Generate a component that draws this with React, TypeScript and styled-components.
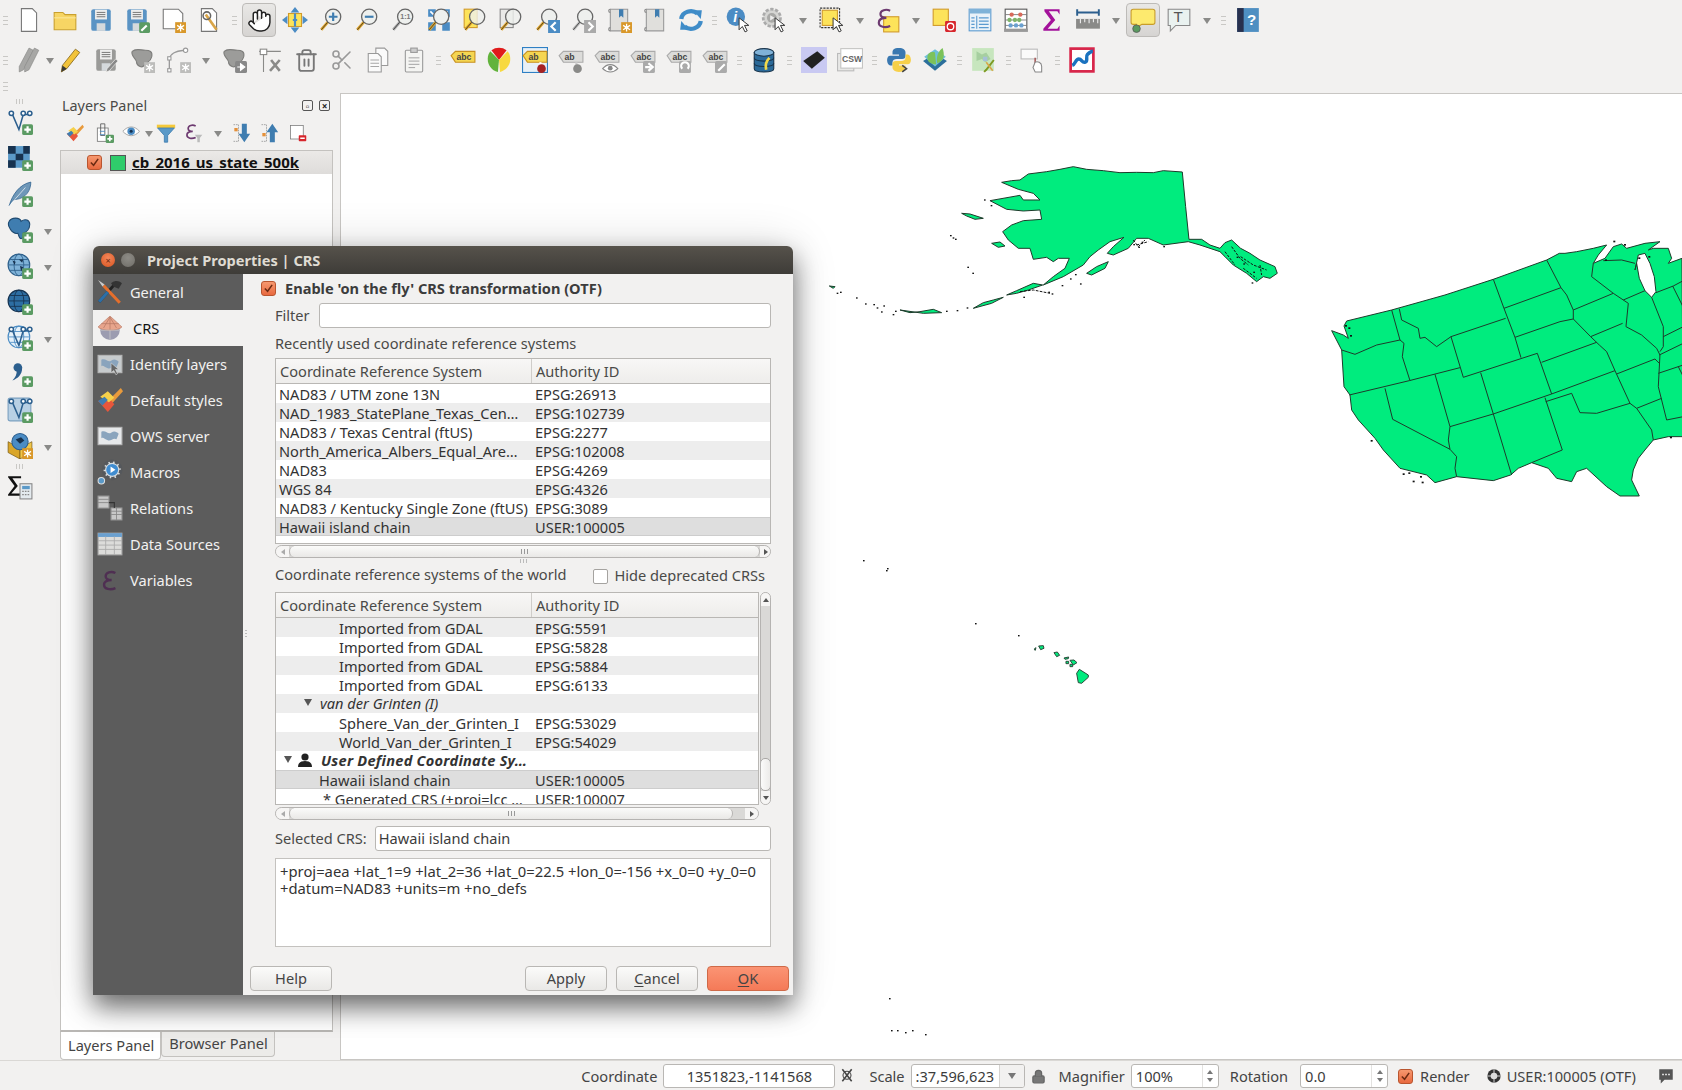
import React from "react";
import styled, { createGlobalStyle, css } from "styled-components";
import { Hand, Trash2, Scissors, Lock } from "lucide-react";

const GlobalStyle = createGlobalStyle`
  html, body { margin: 0; padding: 0; background: #f2f1f0; }
  body { font-family: "Noto Sans", "Open Sans", sans-serif; font-size: 14.6px; color: #3c3c3c; }
  svg text { font-family: "Liberation Sans", sans-serif; }
`;

const Screen = styled.div`
  position: relative;
  width: 1682px;
  height: 1090px;
  overflow: hidden;
  display: flex;
  flex-direction: column;
  background: #f2f1f0;
`;

const ToolRow = styled.div`
  height: 40px;
  display: flex;
  align-items: center;
  flex-shrink: 0;
`;

const ThinRow = styled.div`
  height: 13px;
  display: flex;
  align-items: center;
  flex-shrink: 0;
`;

const Tool = styled.div<{ $on?: boolean }>`
  width: 36px;
  height: 34px;
  flex-shrink: 0;
  display: flex;
  align-items: center;
  justify-content: center;
  box-sizing: border-box;
  border-radius: 4px;
  ${(p) =>
    p.$on &&
    css`
      width: 34px;
      margin: 0 1px;
      background: linear-gradient(#e9e8e6, #d6d4d2);
      border: 1px solid #bdbbb8;
    `}
`;

const Drop = styled.div<{ $w: number }>`
  width: ${(p) => p.$w}px;
  flex-shrink: 0;
  display: flex;
  justify-content: center;
  &::after {
    content: "";
    flex-shrink: 0;
    border-left: 4px solid transparent;
    border-right: 4px solid transparent;
    border-top: 6px solid #8a8a88;
    margin-top: 2px;
  }
`;

const Grip = styled.div<{ $w: number }>`
  width: ${(p) => p.$w}px;
  height: 9px;
  flex-shrink: 0;
  display: flex;
  justify-content: center;
  &::after {
    content: "";
    width: 5px;
    background: repeating-linear-gradient(#c9c8c5 0 1px, transparent 1px 4px);
  }
`;

const Middle = styled.div`
  flex: 1;
  display: flex;
  min-height: 0;
`;

const LeftBar = styled.div`
  width: 60px;
  flex-shrink: 0;
  display: flex;
  flex-direction: column;
  padding-top: 6px;
  box-sizing: border-box;
`;

const LeftGrip = styled.div`
  height: 5px;
  width: 38px;
  background: repeating-linear-gradient(90deg, #c9c8c5 0 1px, transparent 1px 3px);
  background-size: 7px 5px;
  background-repeat: no-repeat;
  background-position: center;
`;

const LeftItem = styled.div`
  height: 36px;
  display: flex;
  align-items: center;
  padding-left: 7px;
  position: relative;
`;

const LeftDrop = styled.span`
  position: absolute;
  left: 44px;
  top: 17px;
  border-left: 4px solid transparent;
  border-right: 4px solid transparent;
  border-top: 6px solid #8a8a88;
`;

const Panel = styled.div`
  width: 273px;
  flex-shrink: 0;
  display: flex;
  flex-direction: column;
`;

const PanelTitle = styled.div`
  height: 25px;
  display: flex;
  align-items: center;
  padding-left: 2px;
  color: #4a4a48;
  font-size: 14.4px;
  justify-content: space-between;
`;

const PanelBtns = styled.div`
  display: flex;
  gap: 6px;
  padding-right: 3px;
`;

const MiniBox = styled.span`
  width: 11px;
  height: 11px;
  border: 1px solid #555;
  border-radius: 2px;
  box-sizing: border-box;
  display: flex;
  align-items: center;
  justify-content: center;
  font-size: 10px;
  line-height: 1;
  font-weight: 700;
  color: #222;
`;

const PanelTools = styled.div`
  height: 32px;
  box-sizing: border-box;
  padding: 0 0 3px 1px;
  display: flex;
  align-items: center;
`;

const PanelTool = styled.div`
  width: 28.5px;
  display: flex;
  justify-content: center;
  flex-shrink: 0;
`;

const Tree = styled.div`
  flex: 1;
  background: #fff;
  border: 1px solid #c4c2bf;
  border-bottom: 2px solid #b9b7b4;
`;

const LayerRow = styled.div`
  height: 23px;
  display: flex;
  align-items: center;
  padding-left: 26px;
  background: linear-gradient(#ebe9e7, #dedcda);
`;

const Swatch = styled.span`
  width: 16px;
  height: 16px;
  margin-left: 8px;
  background: #2fcc6b;
  border: 1px solid #555;
  box-sizing: border-box;
`;

const LayerName = styled.span`
  margin: 0 0 1px 6px;
  font-weight: 700;
  font-size: 15px;
  color: #111;
  text-decoration: underline;
`;

const OrangeCheck = styled.span`
  width: 15px;
  height: 15px;
  flex-shrink: 0;
  box-sizing: border-box;
  border-radius: 3px;
  background: linear-gradient(#f6986f, #e8693f);
  border: 1px solid #b9552f;
  display: flex;
  align-items: center;
  justify-content: center;
`;

const Tabs = styled.div`
  height: 28px;
  display: flex;
  align-items: flex-start;
`;

const Tab = styled.div<{ $on?: boolean }>`
  height: ${(p) => (p.$on ? 28 : 25)}px;
  box-sizing: border-box;
  padding: 0 6px 2px 7px;
  display: flex;
  align-items: center;
  border: 1px solid #c4c2bf;
  border-top: none;
  border-radius: 0 0 4px 4px;
  background: ${(p) => (p.$on ? "#fff" : "#ecebe9")};
  color: #444;
`;

const MapArea = styled.div`
  flex: 1;
  margin-left: 7px;
  background: #fff;
  border: 1px solid #c8c6c3;
  border-right: none;
  min-width: 0;
  overflow: hidden;
`;

const MapSvg = styled.svg`
  display: block;
  width: 100%;
  height: 100%;
`;

const StatusBar = styled.div`
  height: 30px;
  flex-shrink: 0;
  display: flex;
  align-items: center;
  justify-content: flex-end;
  padding: 1px 7px 0 0;
  color: #444;
  border-top: 1px solid #dad8d5;
  box-sizing: border-box;
`;

const StatusLabel = styled.span<{ $ml: number }>`
  margin-left: ${(p) => p.$ml}px;
  white-space: nowrap;
`;

const StatusField = styled.div<{ $w: number; $ml: number; $center?: boolean }>`
  width: ${(p) => p.$w}px;
  margin-left: ${(p) => p.$ml}px;
  height: 24px;
  flex-shrink: 0;
  box-sizing: border-box;
  background: #fff;
  border: 1px solid #b9b7b4;
  border-radius: 3px;
  display: flex;
  align-items: center;
  justify-content: ${(p) => (p.$center ? "center" : "space-between")};
  padding-left: ${(p) => (p.$center ? 0 : 4)}px;
  overflow: hidden;
  color: #3c3c3c;
`;

const SpinArrows = styled.span`
  width: 16px;
  height: 100%;
  border-left: 1px solid #e3e2e0;
  display: flex;
  flex-direction: column;
  justify-content: space-between;
  align-items: center;
  padding: 5px 0;
  box-sizing: border-box;
  &::before,
  &::after {
    content: "";
    border-left: 3px solid transparent;
    border-right: 3px solid transparent;
  }
  &::before {
    border-bottom: 4px solid #777;
  }
  &::after {
    border-top: 4px solid #777;
  }
`;

const ComboArrow = styled.span`
  width: 24px;
  height: 100%;
  border-left: 1px solid #d5d3d0;
  background: #f2f1f0;
  display: flex;
  align-items: center;
  justify-content: center;
  &::after {
    content: "";
    border-left: 4px solid transparent;
    border-right: 4px solid transparent;
    border-top: 6px solid #777;
  }
`;

const StatusIcon = styled.span<{ $ml: number }>`
  margin-left: ${(p) => p.$ml}px;
  display: flex;
  align-items: center;
`;

/* dialog floats over the main window */
const Dialog = styled.div`
  position: absolute;
  left: 93px;
  top: 246px;
  width: 700px;
  height: 749px;
  display: flex;
  flex-direction: column;
  border-radius: 6px 6px 0 0;
  box-shadow: 0 12px 26px rgba(0, 0, 0, 0.55), 0 0 48px rgba(0, 0, 0, 0.14);
`;

const TitleBar = styled.div`
  height: 28px;
  flex-shrink: 0;
  display: flex;
  align-items: center;
  padding-left: 8px;
  border-radius: 6px 6px 0 0;
  background: linear-gradient(#56524b, #3e3c38);
`;

const WinBtn = styled.span<{ $close?: boolean }>`
  width: 14px;
  height: 14px;
  border-radius: 50%;
  margin-right: 6px;
  display: flex;
  align-items: center;
  justify-content: center;
  font-size: 9px;
  line-height: 1;
  color: #6b2a12;
  background: ${(p) =>
    p.$close
      ? "radial-gradient(circle at 50% 35%, #f3875a, #d9541f)"
      : "radial-gradient(circle at 50% 35%, #8e8c86, #6f6d67)"};
`;

const DialogTitle = styled.span`
  margin-left: 6px;
  font-weight: 700;
  font-size: 14.6px;
  color: #dfdbd2;
`;

const DialogBody = styled.div`
  flex: 1;
  display: flex;
  min-height: 0;
`;

const Sidebar = styled.div`
  width: 150px;
  flex-shrink: 0;
  background: #5c5c5c;
  position: relative;
  &::after {
    content: "";
    position: absolute;
    right: -4px;
    top: 356px;
    width: 2px;
    height: 7px;
    background: repeating-linear-gradient(#bbb 0 1px, transparent 1px 3px);
  }
`;

const SideItem = styled.div<{ $on?: boolean }>`
  height: 36px;
  display: flex;
  align-items: center;
  padding-left: 4px;
  gap: ${(p) => (p.$on ? 10 : 7)}px;
  color: ${(p) => (p.$on ? "#111" : "#f2f1f0")};
  background: ${(p) => (p.$on ? "#f2f1f0" : "transparent")};
`;

const Content = styled.div`
  flex: 1;
  min-width: 0;
  display: flex;
  flex-direction: column;
  padding: 0 22px 0 32px;
  background: #f2f1f0;
  color: #4a4a48;
`;

const OtfRow = styled.div`
  display: flex;
  align-items: center;
  height: 20px;
  margin: 4px 0 0 -14px;
  gap: 9px;
  font-weight: 700;
  color: #3c3c3c;
`;

const FormRow = styled.div<{ $mt: number; $gap: number }>`
  display: flex;
  align-items: center;
  height: 25px;
  margin-top: ${(p) => p.$mt}px;
  gap: ${(p) => p.$gap}px;
`;

const FormLabel = styled.span`
  margin-bottom: 2px;
`;

const TextField = styled.div`
  flex: 1;
  height: 25px;
  box-sizing: border-box;
  background: #fff;
  border: 1px solid #b9b7b4;
  border-radius: 3px;
  padding: 0 0 2px 3px;
  display: flex;
  align-items: center;
  color: #3c3c3c;
`;

const SectionLabel = styled.div<{ $mt: number }>`
  height: 20px;
  line-height: 18px;
  margin-top: ${(p) => p.$mt}px;
  display: flex;
  justify-content: space-between;
`;

const HideBox = styled.span`
  display: flex;
  align-items: center;
  gap: 7px;
  padding-right: 6px;
  &::before {
    content: "";
    width: 13px;
    height: 13px;
    margin-top: 2px;
    background: #fff;
    border: 1px solid #a5a3a0;
    border-radius: 2px;
  }
`;

const TableBox = styled.div<{ $h: number; $mt?: number }>`
  height: ${(p) => p.$h}px;
  margin-top: ${(p) => p.$mt ?? 0}px;
  box-sizing: border-box;
  flex-shrink: 0;
  border: 1px solid #b9b7b4;
  background: #fff;
  overflow: hidden;
`;

const GrowTable = styled(TableBox)`
  flex: 1;
  min-width: 0;
`;

const TableHead = styled.div`
  height: 25px;
  box-sizing: border-box;
  display: grid;
  grid-template-columns: 256px 1fr;
  align-items: center;
  background: linear-gradient(#f8f7f6, #eeedeb);
  border-bottom: 1px solid #b9b7b4;
  color: #4a4a48;
`;

const HeadCell = styled.div<{ $first?: boolean }>`
  height: 100%;
  display: flex;
  align-items: center;
  padding-left: 4px;
  border-right: ${(p) => (p.$first ? "1px solid #cfcdca" : "none")};
  box-sizing: border-box;
`;

type Tone = "white" | "grey" | "sel";

const Row = styled.div<{ $tone: Tone }>`
  height: 19px;
  box-sizing: border-box;
  padding-bottom: 2px;
  display: grid;
  grid-template-columns: 256px 1fr;
  align-items: center;
  color: #333;
  white-space: nowrap;
  background: ${(p) => (p.$tone === "white" ? "#fff" : p.$tone === "grey" ? "#ededed" : "#dedede")};
  box-shadow: ${(p) => (p.$tone === "sel" ? "inset 0 1px #cdcdcd, inset 0 -1px #cdcdcd" : "none")};
`;

const NameCell = styled.div<{ $indent: number; $italic?: boolean; $bold?: boolean }>`
  display: flex;
  align-items: center;
  padding-left: ${(p) => p.$indent}px;
  font-style: ${(p) => (p.$italic ? "italic" : "normal")};
  font-weight: ${(p) => (p.$bold ? 700 : 400)};
  letter-spacing: ${(p) => (p.$bold ? 0.25 : 0)}px;
  overflow: hidden;
`;

const AuthCell = styled.div`
  padding-left: 3px;
`;

const Tri = styled.span`
  width: 0;
  height: 0;
  flex-shrink: 0;
  border-left: 4px solid transparent;
  border-right: 4px solid transparent;
  border-top: 7px solid #555;
`;

const TreeLabel = styled.span`
  margin-left: 8px;
`;

const UserGlyph = styled.svg`
  width: 16px;
  height: 14px;
  margin: 0 8px 0 5px;
  flex-shrink: 0;
`;

const TableWrap = styled.div`
  display: flex;
  margin-top: 7px;
  gap: 1px;
`;

const HScroll = styled.div<{ $w?: number; $mt: number }>`
  height: 13px;
  width: ${(p) => (p.$w ? `${p.$w}px` : "100%")};
  margin-top: ${(p) => p.$mt}px;
  box-sizing: border-box;
  border: 1px solid #b5b3b1;
  border-radius: 7px;
  display: flex;
  align-items: center;
  background: #dad9d7;
  overflow: hidden;
  flex-shrink: 0;
`;

const ScrollEnd = styled.span<{ $right?: boolean; $w: number }>`
  width: ${(p) => p.$w}px;
  height: 100%;
  flex-shrink: 0;
  background: #f6f5f4;
  display: flex;
  align-items: center;
  justify-content: center;
  margin-left: ${(p) => (p.$right ? "auto" : 0)};
  &::after {
    content: "";
    border-top: 3px solid transparent;
    border-bottom: 3px solid transparent;
    ${(p) => (p.$right ? "border-left: 4px solid #555;" : "border-right: 4px solid #aaa;")}
  }
`;

const HThumb = styled.span<{ $w: number }>`
  width: ${(p) => p.$w}px;
  height: 100%;
  flex-shrink: 0;
  box-sizing: border-box;
  border: 1px solid #b5b3b1;
  border-top: none;
  border-bottom: none;
  border-radius: 6px;
  background: linear-gradient(#fbfbfa, #e9e8e6);
  display: flex;
  align-items: center;
  justify-content: center;
  &::after {
    content: "";
    width: 7px;
    height: 5px;
    background: repeating-linear-gradient(90deg, #999 0 1px, transparent 1px 3px);
  }
`;

const Splitter = styled.div`
  height: 0;
  position: relative;
  &::after {
    content: "";
    position: absolute;
    left: 245px;
    top: 1px;
    width: 7px;
    height: 4px;
    background: repeating-linear-gradient(90deg, #bbb 0 1px, transparent 1px 3px);
  }
`;

const VScroll = styled.div`
  width: 11px;
  height: 213px;
  flex-shrink: 0;
  box-sizing: border-box;
  border: 1px solid #b5b3b1;
  border-radius: 6px;
  display: flex;
  flex-direction: column;
  background: #dad9d7;
  overflow: hidden;
`;

const VEnd = styled.span<{ $down?: boolean }>`
  height: 13px;
  flex-shrink: 0;
  background: #f6f5f4;
  display: flex;
  align-items: center;
  justify-content: center;
  &::after {
    content: "";
    border-left: 3px solid transparent;
    border-right: 3px solid transparent;
    ${(p) => (p.$down ? "border-top: 4px solid #555;" : "border-bottom: 4px solid #555;")}
  }
`;

const VThumb = styled.span`
  height: 33px;
  margin-top: auto;
  flex-shrink: 0;
  box-sizing: border-box;
  border: 1px solid #a9a7a5;
  border-radius: 5px;
  margin-left: -1px;
  margin-right: -1px;
  background: linear-gradient(90deg, #fbfbfa, #ecebe9);
`;

const Proj = styled.div`
  height: 89px;
  margin-top: 7px;
  flex-shrink: 0;
  box-sizing: border-box;
  background: #fff;
  border: 1px solid #c4c2bf;
  padding: 4px 4px;
  line-height: 17px;
  font-size: 14.8px;
  color: #333;
`;

const Buttons = styled.div`
  margin: 19px -18px 0 -25px;
  height: 25px;
  display: flex;
  gap: 9px;
`;

const Btn = styled.div<{ $ok?: boolean }>`
  width: 82px;
  height: 25px;
  box-sizing: border-box;
  padding-bottom: 2px;
  display: flex;
  align-items: center;
  justify-content: center;
  border-radius: 4px;
  border: 1px solid ${(p) => (p.$ok ? "#cf6a48" : "#b9b7b4")};
  background: ${(p) => (p.$ok ? "linear-gradient(#fb9474, #f47a58)" : "linear-gradient(#fbfbfa, #e9e8e6)")};
  color: #444;
  & u {
    text-underline-offset: 2px;
  }
`;

const BtnGap = styled.div`
  flex: 1;
`;

/* ---------- icon parts ---------- */

const IcSvg = styled.svg`
  display: block;
  flex-shrink: 0;
`;

const Ic = ({ children, s = 26 }: { children: React.ReactNode; s?: number }) => (
  <IcSvg width={s} height={s} viewBox="0 0 24 24">
    {children}
  </IcSvg>
);

const PlusBadge = () => (
  <g>
    <rect x="14" y="14" width="10" height="10" rx="1.5" fill="#5b9b63" />
    <path d="M19 16v6M16 19h6" stroke="#fff" strokeWidth="2" />
  </g>
);

const GearBadge = ({ c = "#d9982a" }: { c?: string }) => (
  <g>
    <rect x="14" y="14" width="10" height="10" fill={c} />
    <path d="M19 15.5v7M15.8 17l6.4 4M15.8 21l6.4-4" stroke="#fff" strokeWidth="1.2" />
    <circle cx="19" cy="19" r="1.6" fill="#fff" />
  </g>
);

const Page = () => <path d="M5 1.5h10l4 4v17H5z" fill="#fff" stroke="#777" strokeWidth="1" />;

const Floppy = ({ c = "#5a93c4" }: { c?: string }) => (
  <g>
    <rect x="3" y="2" width="18" height="20" rx="2" fill={c} />
    <rect x="6.5" y="2.5" width="11" height="9" fill="#eee" />
    <path d="M8 5h8M8 7h8M8 9h8" stroke="#666" strokeWidth="0.8" />
    <rect x="8" y="15" width="8" height="7" fill="#d5d9dc" />
  </g>
);

const Mag = ({ h = "#e0a52c", fill = "#eef0ee" }: { h?: string; fill?: string }) => (
  <g>
    <path d="M9 14 3 21" stroke={h} strokeWidth="2.6" />
    <path d="M9 14 3 21" stroke="#222" strokeWidth="0.7" />
    <circle cx="14" cy="9" r="7" fill={fill} stroke="#666" strokeWidth="1.2" />
  </g>
);

const Cursor = () => (
  <path d="M13 10v11l3-3 2.5 5 2-1-2.5-5h4z" fill="#fff" stroke="#333" strokeWidth="0.9" />
);

const AbcTag = ({ c = "#f5d652", t = "abc", e = "#c8901f" }: { c?: string; t?: string; e?: string }) => (
  <g>
    <path d="M1 8 5 4h18v10H5z" fill={c} stroke={e} strokeWidth="1" />
    <text x="6" y="12" fontSize="8" fill="#444" fontWeight="700">
      {t}
    </text>
  </g>
);

const GreyBadge = ({ d }: { d: string }) => (
  <g>
    <rect x="12" y="13" width="11" height="11" rx="1.5" fill="#aaa" />
    <path d={d} fill="none" stroke="#fff" strokeWidth="2" />
  </g>
);

const Blob = () => (
  <path d="M3 4c3-3 8-1 12-1s7 1 6 6-5 5-7 8-7 0-7-3-6-6-4-10z" fill="#9c9c9a" stroke="#7d7d7b" />
);

const Globe = ({ c = "#7fb2d8", k = "#2d5f8a" }: { c?: string; k?: string }) => (
  <g>
    <circle cx="11" cy="11" r="10" fill={c} stroke={k} />
    <ellipse cx="11" cy="11" rx="4.5" ry="10" fill="none" stroke={k} strokeWidth="0.8" />
    <path d="M1 11h20M3 6h16M3 16h16" stroke={k} strokeWidth="0.8" />
  </g>
);

const Yellow = ({ x = 5, y = 3, w = 14, h = 14 }: { x?: number; y?: number; w?: number; h?: number }) => (
  <rect x={x} y={y} width={w} height={h} fill="#fde35a" stroke="#d19a2a" strokeWidth="1" />
);

const PencilShape = ({ c = "#f2c33a" }: { c?: string }) => (
  <g>
    <path d="M17 2l4 3L9 20l-5 3 1-6z" fill={c} stroke="#8a6b1e" strokeWidth="0.8" />
    <path d="M4 23l1-6 4 3z" fill="#3a3a38" />
  </g>
);

const VTrace = ({ c = "#2c5f8e" }: { c?: string }) => (
  <g fill="none" stroke={c} strokeWidth="1.4">
    <path d="M5 5l6 14 4-14h6" />
    <circle cx="4" cy="4" r="2" fill="#fff" />
    <circle cx="15" cy="4" r="2" fill="#fff" />
    <circle cx="21" cy="4" r="2" fill="#fff" />
  </g>
);

const Epsilon = ({ c = "#6d3a70", w = 2 }: { c?: string; w?: number }) => (
  <path d="M14 3.5C10 1.5 5 3 5 6.5c0 2.5 2.5 3.5 5.5 3.5C7 10 3.5 11 3.5 14.5c0 4 6 5 10.5 3" fill="none" stroke={c} strokeWidth={w} />
);

const Scroll = () => (
  <g>
    <path d="M4 2h16v20H4z" fill="#e0dfdc" stroke="#999" />
    <path d="M4 2c-2 0-2 3 0 3M4 19c-2 0-2 3 0 3" fill="none" stroke="#888" />
    <path d="M12 2v8l2-2 2 2V2z" fill="#3f7db0" />
  </g>
);

const MapCard = ({ c = "#dfe3e6" }: { c?: string }) => (
  <g>
    <rect x="1" y="4" width="22" height="16" fill={c} stroke="#b5b5b5" />
    <path d="M4 8c4-2 6 3 9 1s5-1 7 1l-2 5c-3-2-5 2-8 1s-4-3-6-2z" fill="#8aa4bd" />
  </g>
);

const Ico: Record<string, React.ReactNode> = {
  new: <Page />,
  open: (
    <g>
      <path d="M2 5h8l2 2h10v14H2z" fill="#f7d564" stroke="#c9a02e" />
      <path d="M2 10h20" stroke="#fbe79a" strokeWidth="1" />
    </g>
  ),
  save: <Floppy />,
  saveAs: (
    <g>
      <Floppy />
      <rect x="14" y="14" width="10" height="10" rx="1.5" fill="#5b9b63" />
      <path d="M16 22l5-5" stroke="#fff" strokeWidth="2" />
    </g>
  ),
  layoutNew: (
    <g>
      <path d="M3 2h14l4 4v14H3z" fill="#fff" stroke="#777" />
      <GearBadge />
    </g>
  ),
  layoutMgr: (
    <g>
      <Page />
      <path d="M9 7l10 14" stroke="#d9a548" strokeWidth="2.5" />
      <circle cx="10" cy="8" r="3.5" fill="none" stroke="#666" strokeWidth="1.4" />
    </g>
  ),
  pan: (
    <g>
      <Yellow x={6} y={6} w={12} h={12} />
      <path d="M12 0l4 5H8zM12 24l4-5H8zM0 12l5-4v8zM24 12l-5-4v8z" fill="#4b8cc4" />
      <path d="M10 12h4M12 6v12" stroke="#4b8cc4" strokeWidth="2" />
    </g>
  ),
  zoomIn: (
    <g>
      <Mag />
      <path d="M14 5v8M10 9h8" stroke="#3f7db0" strokeWidth="2" />
    </g>
  ),
  zoomOut: (
    <g>
      <Mag />
      <path d="M10 9h8" stroke="#3f7db0" strokeWidth="2" />
    </g>
  ),
  zoom11: (
    <g>
      <Mag h="#aaa" />
      <text x="9.5" y="11.5" fontSize="6.5" fontWeight="700" fill="#777">
        1:1
      </text>
    </g>
  ),
  full: (
    <g>
      <path d="M2 2h7v7H2zM15 2h7v7h-7zM2 14h7v8H2zM15 14h7v8h-7z" fill="#4b8cc4" />
      <path d="M4 4l4 4M20 4l-4 4" stroke="#fff" strokeWidth="1.5" />
      <Mag />
    </g>
  ),
  zoomSel: (
    <g>
      <Yellow x={2} y={2} w={12} h={17} />
      <Mag fill="#eef0eecc" />
    </g>
  ),
  zoomLayer: (
    <g>
      <rect x="2" y="2" width="12" height="17" fill="#e9e9e7" stroke="#888" />
      <Mag fill="#eef0eecc" />
    </g>
  ),
  zoomLast: (
    <g>
      <Mag />
      <rect x="13" y="12" width="11" height="12" fill="#4b8cc4" />
      <path d="M20 14l-4 4 4 4" fill="none" stroke="#fff" strokeWidth="2" />
    </g>
  ),
  zoomNext: (
    <g>
      <Mag h="#bbb" />
      <rect x="13" y="12" width="11" height="12" fill="#aaa" />
      <path d="M17 14l4 4-4 4" fill="none" stroke="#fff" strokeWidth="2" />
    </g>
  ),
  mapNew: (
    <g>
      <Scroll />
      <GearBadge />
    </g>
  ),
  mapBook: <Scroll />,
  refresh: (
    <g fill="none" stroke="#3f8cc8" strokeWidth="4">
      <path d="M3 11a9 8 0 0 1 15-5" />
      <path d="M21 13a9 8 0 0 1-15 5" />
      <path d="M14 3l8 0-1 8z" fill="#3f8cc8" stroke="none" />
      <path d="M10 21l-8 0 1-8z" fill="#3f8cc8" stroke="none" />
    </g>
  ),
  info: (
    <g>
      <circle cx="10" cy="9" r="8.5" fill="#4b8cc4" />
      <text x="7.5" y="14" fontSize="13" fill="#fff" fontWeight="700" fontStyle="italic">
        i
      </text>
      <Cursor />
    </g>
  ),
  runGear: (
    <g>
      <circle cx="10" cy="10" r="8" fill="#d5d5d3" stroke="#aaa" strokeWidth="2.5" strokeDasharray="3 1.5" />
      <circle cx="10" cy="10" r="4.5" fill="#a9a9a7" />
      <path d="M8.5 7.5l4 2.5-4 2.5z" fill="#eee" />
      <Cursor />
    </g>
  ),
  select: (
    <g>
      <rect x="1" y="1" width="18" height="18" fill="none" stroke="#333" strokeDasharray="2 1" />
      <Yellow x={3} y={3} w={14} h={14} />
      <Cursor />
    </g>
  ),
  selExpr: (
    <g>
      <Yellow x={8} y={9} w={14} h={14} />
      <Epsilon />
    </g>
  ),
  deselect: (
    <g>
      <Yellow x={2} y={2} w={14} h={15} />
      <rect x="13" y="13" width="10" height="10" rx="1" fill="#d7262c" />
      <circle cx="18" cy="18" r="3" fill="none" stroke="#fff" strokeWidth="1.2" />
    </g>
  ),
  table: (
    <g>
      <rect x="2" y="2" width="20" height="20" fill="#eaf2f9" stroke="#5a9ad0" />
      <rect x="2" y="2" width="20" height="4" fill="#7fb2d8" />
      <path d="M9 8v12M4 10h3M4 13h3M4 16h3M4 19h3M11 10h9M11 13h9M11 16h9M11 19h9" stroke="#5a9ad0" strokeWidth="1" />
    </g>
  ),
  abacus: (
    <g>
      <rect x="2" y="2" width="20" height="19" fill="#fff" stroke="#555" />
      <rect x="1" y="20" width="22" height="3" fill="#999" />
      <path d="M2 7h20M2 12h20M2 17h20" stroke="#777" strokeWidth="0.8" />
      <g fill="#d96a5a">
        <circle cx="8" cy="7" r="2" />
        <circle cx="16" cy="7" r="2" />
      </g>
      <g fill="#7fb46a">
        <circle cx="6" cy="12" r="2" />
        <circle cx="11" cy="12" r="2" />
        <circle cx="15" cy="12" r="2" />
      </g>
      <g fill="#6aa0d0">
        <circle cx="7" cy="17" r="2" />
        <circle cx="12" cy="17" r="2" />
        <circle cx="17" cy="17" r="2" />
      </g>
    </g>
  ),
  sigma: <path d="M5 2h14v5l-2-3H9l6 8-7 8h9l2-3v5H4v-2l7-8-6-8z" fill="#a3119a" />,
  ruler: (
    <g>
      <path d="M2 5h20M2 2v6M22 2v6" stroke="#2c5f8e" strokeWidth="1.8" />
      <rect x="1" y="11" width="22" height="9" fill="#8a8a88" />
      <path d="M5 11v4M9 11v3M13 11v4M17 11v3M21 11v4" stroke="#eee" />
    </g>
  ),
  note: (
    <g>
      <path d="M3 2h18a2 2 0 0 1 2 2v10a2 2 0 0 1-2 2H11l-5 3v-3H3a2 2 0 0 1-2-2V4a2 2 0 0 1 2-2z" fill="#fdea6e" stroke="#c89c2a" />
      <circle cx="6" cy="20" r="3.5" fill="#5a9a5f" stroke="#555" strokeWidth="0.7" />
    </g>
  ),
  textNote: (
    <g>
      <path d="M2 2h20v15H9l-5 5v-5H2z" fill="#eaf2f0" stroke="#888" />
      <text x="7" y="14" fontSize="14" fill="#555">
        T
      </text>
    </g>
  ),
  help: (
    <g>
      <rect x="2" y="1" width="20" height="22" fill="#4f8fc2" />
      <rect x="2" y="1" width="6" height="22" fill="#28304e" />
      <text x="11" y="17" fontSize="14" fill="#fff" fontWeight="700">
        ?
      </text>
    </g>
  ),
  pencils: (
    <g fill="#a7a7a5" stroke="#8a8a88" strokeWidth="0.6">
      <path d="M12 1l4 2L7 21l-4 2 0-5z" />
      <path d="M17 1l4 2-9 18-4 2 0-5z" />
    </g>
  ),
  pencil: <PencilShape />,
  saveEdits: (
    <g>
      <Floppy c="#9a9a98" />
      <path d="M21 11l2 2-8 9-3 1 1-3z" fill="#888" stroke="#f2f1f0" strokeWidth="0.6" />
    </g>
  ),
  addFeature: (
    <g>
      <Blob />
      <GearBadge c="#bdbdbb" />
    </g>
  ),
  vertex: (
    <g>
      <path d="M4 20V11C5 6 9 4 18 3" fill="none" stroke="#999" strokeWidth="1.2" />
      <rect x="2.5" y="9" width="3" height="3" fill="#fff" stroke="#999" />
      <circle cx="19" cy="3" r="2" fill="#fff" stroke="#999" />
      <rect x="2.5" y="20" width="3" height="3" fill="#fff" stroke="#999" />
      <GearBadge c="#bdbdbb" />
    </g>
  ),
  moveFeature: (
    <g>
      <Blob />
      <rect x="13" y="13" width="11" height="11" rx="1.5" fill="#888" />
      <path d="M15 18.5h4M18 15.5l4 3-4 3z" fill="#fff" stroke="#fff" />
    </g>
  ),
  node: (
    <g stroke="#8a8a88" fill="none">
      <path d="M6 3v20M2 4h20" strokeWidth="1" />
      <rect x="3" y="2" width="6" height="5" fill="#fff" />
      <path d="M12 22l9-10M13 12l8 10" strokeWidth="2.4" />
    </g>
  ),
  copy: (
    <g fill="#fafafa" stroke="#999">
      <path d="M10 1h8l3 3v13H10z" />
      <path d="M3 6h9l3 3v14H3z" />
      <path d="M5 12h8M5 15h8M5 18h8" strokeWidth="0.8" />
    </g>
  ),
  paste: (
    <g fill="#f4f4f2" stroke="#999">
      <rect x="4" y="3" width="16" height="20" rx="1" />
      <rect x="9" y="1" width="6" height="4" fill="#ccc" />
      <path d="M7 10h10M7 13h10M7 16h10M7 19h6" strokeWidth="0.8" />
    </g>
  ),
  abc: <AbcTag />,
  pie: (
    <g>
      <path d="M12 12L5 3a12 12 0 0 1 14 0z" fill="#e01b1b" />
      <path d="M12 12L4 4C-1 10 2 21 11 23z" fill="#62b33c" />
      <path d="M12 12l8-8c5 6 2 17-7 19z" fill="#f7d93f" />
    </g>
  ),
  abPin: (
    <g>
      <rect x="0.5" y="0.5" width="23" height="23" fill="#e8f0f7" stroke="#2e7fc4" />
      <AbcTag t="ab" />
      <path d="M17 14v5" stroke="#fff" strokeWidth="2" />
      <circle cx="18" cy="20" r="4" fill="#a62222" />
    </g>
  ),
  abGrey: (
    <g>
      <AbcTag c="#dcdcda" t="ab" e="#aaa" />
      <path d="M17 14v5" stroke="#ccc" strokeWidth="2" />
      <circle cx="18" cy="20" r="4" fill="#8a8a88" />
    </g>
  ),
  abcEye: (
    <g>
      <AbcTag c="#dcdcda" e="#aaa" />
      <path d="M8 20c4-5 10-5 14 0-4 4-10 4-14 0z" fill="#fff" stroke="#888" />
      <circle cx="15" cy="19.5" r="2.2" fill="#888" />
    </g>
  ),
  abcMove: (
    <g>
      <AbcTag c="#dcdcda" e="#aaa" />
      <GreyBadge d="M14 18.5h5M17 15l4 3.5-4 3.5" />
    </g>
  ),
  abcRotate: (
    <g>
      <AbcTag c="#dcdcda" e="#aaa" />
      <GreyBadge d="M15 20a3.5 3.5 0 1 1 5 0" />
    </g>
  ),
  abcEdit: (
    <g>
      <AbcTag c="#dcdcda" e="#aaa" />
      <GreyBadge d="M15 22l6-6" />
    </g>
  ),
  db: (
    <g>
      <path d="M3 5v15c0 4 18 4 18 0V5z" fill="#2b6a99" stroke="#17324a" />
      <path d="M3 10c0 4 18 4 18 0M3 15c0 4 18 4 18 0" fill="none" stroke="#17324a" />
      <ellipse cx="12" cy="5" rx="9" ry="3.5" fill="#7fb2d8" stroke="#17324a" />
      <path d="M17 10c-3 3-4 7-3 11" fill="none" stroke="#f1d84a" strokeWidth="2.5" />
    </g>
  ),
  diamond: (
    <g>
      <rect width="24" height="24" fill="#c9c9f2" />
      <path d="M2 13L15 4l7 6-12 10z" fill="#222" />
    </g>
  ),
  csw: (
    <g>
      <rect x="0.5" y="6" width="15" height="16" fill="#e8e8e6" stroke="#bbb" />
      <rect x="3.5" y="1.5" width="20" height="18" fill="#fff" stroke="#c4c4c2" />
      <text x="4.5" y="14" fontSize="8" fill="#666" fontWeight="700">
        CSW
      </text>
    </g>
  ),
  python: (
    <g>
      <path d="M12 1c-5 0-6 2-6 4v2h6v1H4c-2 0-3 2-3 4s1 5 3 5h2v-3c0-2 2-3 4-3h5c2 0 3-1 3-3V5c0-2-2-4-6-4z" fill="#3a78b0" />
      <path d="M12 23c5 0 6-2 6-4v-2h-6v-1h8c2 0 3-2 3-4s-1-5-3-5h-2v3c0 2-2 3-4 3H9c-2 0-3 1-3 3v3c0 2 2 4 6 4z" fill="#f7d04a" />
      <path d="M15 17l4 3-4 3" fill="none" stroke="#444" strokeWidth="1.4" />
    </g>
  ),
  plugin: (
    <g>
      <path d="M12 6l11 7-11 9L1 13z" fill="#2c6f9b" />
      <path d="M12 2l10 7-10 9L2 9z" fill="#6fc0d8" />
      <path d="M5 10c0-5 4-6 7-5l1 11C8 16 5 14 5 10zM14 15c-1-6 1-11 5-14 2 6 2 12-5 14z" fill="#7cc25a" />
    </g>
  ),
  greenMap: (
    <g>
      <rect x="2" y="1" width="20" height="21" fill="#c7e6be" />
      <path d="M6 4l5 3 4-2 4 6-5 3-3-3-5 2z" fill="#a6cfa0" />
      <path d="M12 9h4v4h-4z" fill="#a6c0d8" />
      <path d="M22 12l-7 9-2 2" stroke="#7d9a22" strokeWidth="1.8" fill="none" />
      <path d="M15 14l6 8" stroke="#d9a548" strokeWidth="1.5" />
    </g>
  ),
  selectBox: (
    <g>
      <rect x="1" y="2" width="15" height="9" fill="#fafafa" stroke="#bbb" />
      <path d="M14 10v8" stroke="#a96060" strokeWidth="1.5" />
      <path d="M14 14c2-1 6 0 6 4v5h-6l-2-4z" fill="#fff" stroke="#888" />
    </g>
  ),
  river: (
    <g>
      <rect x="1.5" y="1.5" width="21" height="21" fill="#fff" stroke="#d8264a" strokeWidth="2.5" />
      <path d="M3 17c3-1 3-6 6-6s3 4 6 3 0-5 2-7 3-3 5-3" fill="none" stroke="#1a72bf" strokeWidth="3.2" />
    </g>
  ),

  addVec: (
    <g>
      <VTrace />
      <PlusBadge />
    </g>
  ),
  addRaster: (
    <g>
      <rect x="1" y="1" width="20" height="20" fill="#5a99c8" />
      <path d="M1 1h7v7H1zM15 1h6v7h-6zM8 8h7v6H8zM1 14h7v7H1z" fill="#17324f" />
      <PlusBadge />
    </g>
  ),
  feather: (
    <g>
      <path d="M2 23C5 12 12 3 22 1c0 7-4 15-14 16-2 0-4 2-6 6z" fill="#6e97b8" stroke="#2c5f8e" strokeWidth="0.7" />
      <path d="M2 23L17 6" stroke="#fff" strokeWidth="0.6" />
      <PlusBadge />
    </g>
  ),
  pg: (
    <g>
      <path d="M2 4c2-4 10-4 11 0 4-3 8-1 8 3s-3 7-6 8c0 3 0 5-2 5s-2-3-3-5c-3 1-6-2-7-4S0 7 2 4z" fill="#3f7db0" stroke="#1f4a70" />
      <PlusBadge />
    </g>
  ),
  wms: (
    <g>
      <Globe />
      <path d="M5 7l3 1-1 3zM11 6h4l-1 3zM12 12l3 1-2 4z" fill="#17324f" />
      <PlusBadge />
    </g>
  ),
  wfs: (
    <g>
      <Globe c="#2d6ea3" k="#16324f" />
      <PlusBadge />
    </g>
  ),
  wv: (
    <g>
      <Globe c="#e6f1f9" k="#4b8cc4" />
      <VTrace />
      <PlusBadge />
    </g>
  ),
  comma: (
    <g>
      <circle cx="10" cy="6" r="4" fill="#2c5f8e" />
      <path d="M14 6c0 7-4 10-9 12 3-3 4-6 4-9z" fill="#2c5f8e" />
      <PlusBadge />
    </g>
  ),
  vtile: (
    <g>
      <rect x="1" y="1" width="21" height="21" rx="2" fill="#b8d0e4" stroke="#7aa0c0" />
      <VTrace />
      <PlusBadge />
    </g>
  ),
  cube: (
    <g>
      <path d="M1 8l11 6v10L1 18z" fill="#d9a62a" stroke="#6f5210" strokeWidth="0.6" />
      <path d="M23 8l-11 6v10l11-6z" fill="#f0c74a" stroke="#6f5210" strokeWidth="0.6" />
      <circle cx="12" cy="8" r="7.5" fill="#4b8cc4" stroke="#2c5f8e" />
      <path d="M8 6l5-2 3 3-4 3z" fill="#17324f" />
      <GearBadge />
    </g>
  ),
  sigmaCalc: (
    <g>
      <path d="M1 2h12v2H5l5 7-6 7h9v2H1v-1l6-8-6-8z" fill="#111" />
      <rect x="12" y="9" width="11" height="14" fill="#e4eaee" stroke="#888" />
      <rect x="14" y="11" width="7" height="3" fill="#5a99c8" />
      <path d="M14 16h7M14 19h7" stroke="#888" strokeDasharray="1.5 1" />
    </g>
  ),

  brush: (
    <g>
      <path d="M22 1L11 12l3 3L24 4z" fill="#e89a3c" />
      <path d="M11 10l5 6-6 7L1 13z" fill="#e7563c" />
      <path d="M3 9l7-5 6 6-5 4z" fill="#f5d04a" />
      <path d="M1 13l6-4 3 3-5 5z" fill="#3f7db0" />
    </g>
  ),
  eye: (
    <g>
      <path d="M1 10c6-7 14-7 20 0-6 7-14 7-20 0z" fill="#fff" stroke="#999" />
      <circle cx="11" cy="10" r="4.5" fill="#4b8cc4" />
      <circle cx="11" cy="10" r="1.8" fill="#17324f" />
    </g>
  ),
  addGroup: (
    <g>
      <rect x="4" y="6" width="13" height="16" fill="#fff" stroke="#777" />
      <path d="M8 1h5v14H8z" fill="none" stroke="#555" />
      <path d="M7 10h6M7 14h6" stroke="#4b8cc4" />
      <PlusBadge />
    </g>
  ),
  filter: (
    <g>
      <rect x="1" y="2" width="22" height="4" fill="#f5c93a" />
      <path d="M2 6h20l-8 9v8h-4v-8z" fill="#5a99c8" stroke="#3f7db0" />
    </g>
  ),
  exprFilter: (
    <g>
      <Epsilon />
      <path d="M13 14h9l-3 4v5h-3v-5z" fill="#bbb" />
    </g>
  ),
  down: (
    <g>
      <path d="M3 2h6v20H3" fill="none" stroke="#999" strokeDasharray="2 1" />
      <rect x="4" y="6" width="4" height="4" fill="#e5903a" />
      <path d="M13 1h6v12h4l-7 10-7-10h4z" fill="#3f7db0" />
    </g>
  ),
  up: (
    <g>
      <path d="M3 2h6v20H3" fill="none" stroke="#999" strokeDasharray="2 1" />
      <rect x="4" y="12" width="4" height="4" fill="#e5903a" />
      <path d="M13 23h6V11h4L16 1 9 11h4z" fill="#3f7db0" />
    </g>
  ),
  remove: (
    <g>
      <rect x="2" y="2" width="17" height="18" fill="#fff" stroke="#777" />
      <rect x="13" y="15" width="10" height="8" rx="1" fill="#d7262c" />
      <path d="M15 19h6" stroke="#fff" strokeWidth="2" />
    </g>
  ),

  tools: (
    <g>
      <path d="M2 21L18 3" stroke="#222" strokeWidth="2.6" />
      <path d="M13 4c3-3 7-3 10 0l-3 5-5-2z" fill="#333" />
      <path d="M21 22L6 6" stroke="#e56f2c" strokeWidth="2.8" />
      <path d="M1 1l6 4-2 2z" fill="#ccc" />
      <path d="M2 21l8-9" stroke="#2c6fa8" strokeWidth="3" />
    </g>
  ),
  crsGlobe: (
    <g>
      <circle cx="12" cy="14" r="9" fill="#9c9cb0" />
      <path d="M1 11L12 1l11 10c-3 4-19 4-22 0z" fill="#e8a58c" stroke="#b87a66" strokeWidth="0.6" />
      <path d="M6 12L12 2l6 10M12 2v12M4 8h16" stroke="#b87a66" strokeWidth="0.7" fill="none" />
      <path d="M3 14h18M12 14v9" stroke="#ccc" strokeWidth="0.7" />
    </g>
  ),
  identify: (
    <g>
      <MapCard c="#c7cbcd" />
      <path d="M13 11v9l2.5-2 2 4 1.5-1-2-4h3z" fill="#666" stroke="#ddd" strokeWidth="0.5" />
    </g>
  ),
  ows: <MapCard c="#e6e8ea" />,
  macros: (
    <g>
      <circle cx="14" cy="10" r="8" fill="#d8dde0" stroke="#55585c" strokeWidth="3" strokeDasharray="3.5 1.5" />
      <circle cx="14" cy="10" r="5.5" fill="#3f8cd0" />
      <path d="M12.5 7l4.5 3-4.5 3z" fill="#fff" />
      <circle cx="4" cy="20" r="3" fill="#5a99c8" stroke="#ddd" />
    </g>
  ),
  relations: (
    <g>
      <rect x="1" y="1" width="10" height="11" fill="#c8c8c8" stroke="#999" />
      <rect x="13" y="12" width="10" height="11" fill="#c8c8c8" stroke="#999" />
      <path d="M1 4h10M1 7h10M13 15h10M13 18h10M18 12v11" stroke="#888" strokeWidth="0.8" />
      <path d="M11 7h5v5" fill="none" stroke="#333" />
    </g>
  ),
  dataSources: (
    <g>
      <rect x="1" y="2" width="22" height="20" fill="#dcdcda" stroke="#aaa" />
      <rect x="1" y="2" width="22" height="3.5" fill="#6aa0d0" />
      <path d="M1 9h22M1 13h22M1 17h22M8 5v17M16 5v17" stroke="#aaa" strokeWidth="0.8" />
    </g>
  ),
  variables: (
    <g transform="translate(3 2)">
      <Epsilon c="#4f2f52" w={2.2} />
    </g>
  ),
};

const Check = () => (
  <svg width="11" height="11" viewBox="0 0 12 12">
    <path d="M2 6l3 3 5-7" fill="none" stroke="#6b2a12" strokeWidth="1.6" />
  </svg>
);

/* ---------- map geometry, traced from the reference ---------- */

const alaska =
  "545,97 575,92 600,90 625,72 680,65 720,58 760,50 800,58 850,62 900,68 950,67 1000,68 1030,62 1087,66 1097,170 1107,268 1145,268 1170,285 1200,295 1215,278 1235,270 1262,295 1290,310 1320,330 1365,350 1372,370 1350,385 1330,380 1310,395 1280,370 1240,345 1215,320 1200,305 1140,285 1105,275 1030,285 985,265 950,265 925,295 880,315 862,310 880,290 912,262 870,275 835,300 810,320 790,345 730,380 670,405 700,380 735,355 748,325 715,325 700,335 680,322 640,328 630,295 595,295 565,270 548,245 575,225 610,212 665,208 660,180 610,183 560,178 510,152 600,136 610,150 660,150 640,130 595,118";

const alaskaIslands = [
  "800,370 830,350 865,335 855,355 815,375",
  "560,435 590,422 640,400 668,405 625,420 590,430",
  "460,475 490,458 520,450 550,442 515,460",
  "515,280 540,276 555,288 535,292",
  "425,190 450,192 490,205 465,208 440,198",
  "240,480 270,488 300,485 340,478 365,488 310,490",
  "28,408 45,410 40,415",
];

const alaskaInlets = [
  "1235,290 1260,325 1285,345",
  "1215,305 1245,345",
  "1262,320 1300,345 1340,360",
  "1270,355 1310,385",
  "1320,345 1325,375",
  "940,270 955,290 975,270",
  "950,285 985,275",
  "600,425 640,420 690,430",
];

const alaskaDots = [
  [492, 148], [512, 165], [390, 255], [398, 262], [405, 266], [442, 350], [457, 368], [60, 425],
  [50, 428], [108, 442], [135, 460], [160, 462], [170, 472], [183, 484], [190, 466], [218, 492],
  [225, 482], [378, 482], [410, 480], [440, 472], [610, 440], [685, 425], [695, 430], [725, 405],
  [750, 385], [780, 400], [765, 372], [1295, 397], [1030, 288], [940, 282], [955, 290], [965, 275],
  [1250, 320], [1270, 340], [1300, 365],
];

const usa =
  "80,303 215,270 375,225 520,178 680,120 718,100 735,100 770,95 820,85 860,75 835,105 820,130 855,115 880,80 905,72 920,85 975,70 1020,65 985,90 1000,85 1045,85 1055,115 1045,130 1086,115 1090,650 1045,650 1000,660 975,690 955,715 940,750 935,780 958,828 900,828 860,800 800,745 770,755 755,785 710,775 685,745 635,728 595,745 572,765 520,782 410,770 345,788 320,765 240,745 190,690 165,655 115,600 95,570 90,525 72,500 65,390 35,332 70,345 85,355 72,318";

const lake = "945,150 955,105 975,100 990,130 1003,170 1008,215 995,232 975,212 958,175 950,130";

const stateLines = [
  "65,390 105,403 170,375 240,360",
  "215,270 240,360 252,370 247,410 270,482",
  "238,267 245,300 295,325 300,355 315,352 350,380 393,350",
  "520,178 552,265 585,352 603,413",
  "393,350 557,295",
  "393,350 430,472 652,400",
  "552,265 723,203",
  "680,120 723,203 740,225 760,270 760,297 812,350 838,375 860,395 885,452",
  "585,352 720,305 760,297",
  "760,270 880,220",
  "652,400 695,522",
  "665,427 830,367",
  "390,620 520,582 695,522 885,452",
  "88,525 268,482 420,443",
  "345,463 390,620 385,660 390,688",
  "482,458 520,582 575,765",
  "677,545 755,520 780,578 830,580 930,550",
  "675,533 727,690 635,728",
  "195,505 218,598 390,688 410,710 405,745 410,770",
  "885,452 930,550 950,565 995,630 1000,660",
  "890,462 1005,417 1018,430",
  "820,130 815,170 880,220 925,250 918,320 965,345 1010,385 1020,405 1015,500 1040,600 1090,590",
  "812,350 908,310",
  "910,240 975,212",
  "995,232 1030,320 1030,380 1020,395",
  "1008,218 1060,198 1090,182",
  "1058,198 1090,262",
  "950,565 1025,535",
  "1015,460 1090,435",
  "1018,405 1090,370",
  "1030,350 1090,320",
  "1075,440 1090,470",
  "850,122 905,120 945,130",
];

const usaDots = [
  [75, 315], [85, 322], [90, 345], [152, 660], [248, 760], [265, 757], [278, 782], [300, 768], [305, 785],
  [855, 118], [880, 62], [912, 72], [955, 112], [985, 108], [1050, 650],
];

const hawaii = [
  "566,318 580,317 582,325 572,329",
  "552,328 558,323 556,331",
  "612,338 622,336 629,346 620,350",
  "642,354 656,351 655,356 645,358",
  "660,361 672,360 681,368 670,375",
  "648,364 656,364 656,371 648,371",
  "660,373 668,373 668,380 660,380",
  "688,388 715,405 715,412 695,430 685,428 680,400",
];

const farDots = [
  [863, 560], [886, 570], [887, 568], [975, 623], [1018, 635], [889, 998], [891, 1030], [897, 1030],
  [905, 1032], [912, 1030], [925, 1034],
];

const MapDrawing = () => (
  <MapSvg viewBox="341 94 1341 965" preserveAspectRatio="none">
    <g fill="#00ec7e" stroke="#1d3a2a" strokeWidth="3" strokeLinejoin="round" transform="translate(820 150) scale(0.3333)">
      <polygon points={alaska} />
      {alaskaIslands.map((p) => (
        <polygon key={p} points={p} />
      ))}
      {alaskaInlets.map((p) => (
        <polyline key={p} points={p} fill="none" stroke="#111" strokeDasharray="8 4" />
      ))}
      {alaskaDots.map(([x, y]) => (
        <rect key={`${x}-${y}`} x={x} y={y} width="5" height="4" fill="#111" stroke="none" />
      ))}
    </g>
    <g fill="#00ec7e" stroke="#1d3a2a" strokeWidth="3" strokeLinejoin="round" transform="translate(1320 220) scale(0.3333)">
      <polygon points={usa} />
      <polygon points={lake} fill="#fff" />
      {stateLines.map((p) => (
        <polyline key={p} points={p} fill="none" />
      ))}
      {usaDots.map(([x, y]) => (
        <rect key={`${x}-${y}`} x={x} y={y} width="6" height="5" fill="#111" stroke="none" />
      ))}
    </g>
    <g fill="#00ec7e" stroke="#2a4a3a" strokeWidth="3" transform="translate(850 540) scale(0.3333)">
      {hawaii.map((p) => (
        <polygon key={p} points={p} />
      ))}
    </g>
    {farDots.map(([x, y]) => (
      <rect key={`${x}-${y}`} x={x} y={y} width="1.6" height="1.4" fill="#111" />
    ))}
  </MapSvg>
);

/* ---------- table data ---------- */

const recent: [string, string, Tone][] = [
  ["NAD83 / UTM zone 13N", "EPSG:26913", "white"],
  ["NAD_1983_StatePlane_Texas_Cen…", "EPSG:102739", "grey"],
  ["NAD83 / Texas Central (ftUS)", "EPSG:2277", "white"],
  ["North_America_Albers_Equal_Are…", "EPSG:102008", "grey"],
  ["NAD83", "EPSG:4269", "white"],
  ["WGS 84", "EPSG:4326", "grey"],
  ["NAD83 / Kentucky Single Zone (ftUS)", "EPSG:3089", "white"],
  ["Hawaii island chain", "USER:100005", "sel"],
];

const sideItems: [string, string][] = [
  ["tools", "General"],
  ["crsGlobe", "CRS"],
  ["identify", "Identify layers"],
  ["brush", "Default styles"],
  ["ows", "OWS server"],
  ["macros", "Macros"],
  ["relations", "Relations"],
  ["dataSources", "Data Sources"],
  ["variables", "Variables"],
];

const row1a = ["new", "open", "save", "saveAs", "layoutNew", "layoutMgr"];
const row1b = ["pan", "zoomIn", "zoomOut", "zoom11", "full", "zoomSel", "zoomLayer", "zoomLast", "zoomNext", "mapNew", "mapBook", "refresh"];
const row2a = ["pencil", "saveEdits", "addFeature", "vertex"];
const row2c = ["abc", "pie", "abPin", "abGrey", "abcEye", "abcMove", "abcRotate", "abcEdit"];

const tools = (names: string[]) => names.map((n) => <Tool key={n}><Ic>{Ico[n]}</Ic></Tool>);

const leftItems: [string, boolean][] = [
  ["addVec", false],
  ["addRaster", false],
  ["feather", false],
  ["pg", true],
  ["wms", true],
  ["wfs", false],
  ["wv", true],
  ["comma", false],
  ["vtile", false],
  ["cube", true],
];

export default function App() {
  return (
    <Screen>
      <GlobalStyle />
      <ToolRow>
        <Grip $w={11} />
        {tools(row1a)}
        <Grip $w={14} />
        <Tool $on><Hand size={25} color="#222" fill="#fff" strokeWidth={1.4} /></Tool>
        {tools(row1b)}
        <Grip $w={11} />
        <Tool><Ic>{Ico.info}</Ic></Tool>
        <Tool><Ic>{Ico.runGear}</Ic></Tool>
        <Drop $w={22} />
        <Tool><Ic>{Ico.select}</Ic></Tool>
        <Drop $w={20} />
        <Tool><Ic>{Ico.selExpr}</Ic></Tool>
        <Drop $w={20} />
        {tools(["deselect", "table", "abacus", "sigma", "ruler"])}
        <Drop $w={19} />
        <Tool $on><Ic>{Ico.note}</Ic></Tool>
        <Tool><Ic>{Ico.textNote}</Ic></Tool>
        <Drop $w={20} />
        <Grip $w={13} />
        <Tool><Ic>{Ico.help}</Ic></Tool>
      </ToolRow>
      <ToolRow>
        <Grip $w={11} />
        <Tool><Ic>{Ico.pencils}</Ic></Tool>
        <Drop $w={5} />
        {tools(row2a)}
        <Drop $w={20} />
        <Tool><Ic>{Ico.moveFeature}</Ic></Tool>
        <Tool><Ic>{Ico.node}</Ic></Tool>
        <Tool><Trash2 size={25} color="#777" strokeWidth={1.8} /></Tool>
        <Tool><Scissors size={24} color="#999" strokeWidth={1.6} /></Tool>
        <Tool><Ic>{Ico.copy}</Ic></Tool>
        <Tool><Ic>{Ico.paste}</Ic></Tool>
        <Grip $w={13} />
        {tools(row2c)}
        <Grip $w={13} />
        <Tool><Ic>{Ico.db}</Ic></Tool>
        <Grip $w={14} />
        {tools(["diamond", "csw"])}
        <Grip $w={13} />
        {tools(["python", "plugin"])}
        <Grip $w={12} />
        <Tool><Ic>{Ico.greenMap}</Ic></Tool>
        <Grip $w={14} />
        <Tool><Ic>{Ico.selectBox}</Ic></Tool>
        <Grip $w={13} />
        <Tool><Ic>{Ico.river}</Ic></Tool>
      </ToolRow>
      <ThinRow>
        <Grip $w={11} />
      </ThinRow>
      <Middle>
        <LeftBar>
          <LeftGrip />
          {leftItems.map(([name, drop]) => (
            <LeftItem key={name}>
              <Ic>{Ico[name]}</Ic>
              {drop && <LeftDrop />}
            </LeftItem>
          ))}
          <LeftGrip />
          <LeftItem>
            <Ic>{Ico.sigmaCalc}</Ic>
          </LeftItem>
        </LeftBar>
        <Panel>
          <PanelTitle>
            Layers Panel
            <PanelBtns>
              <MiniBox>▫</MiniBox>
              <MiniBox>×</MiniBox>
            </PanelBtns>
          </PanelTitle>
          <PanelTools>
            <PanelTool><Ic s={18}>{Ico.brush}</Ic></PanelTool>
            <PanelTool><Ic s={20}>{Ico.addGroup}</Ic></PanelTool>
            <PanelTool><Ic s={20}>{Ico.eye}</Ic></PanelTool>
            <Drop $w={5} />
            <PanelTool><Ic s={20}>{Ico.filter}</Ic></PanelTool>
            <PanelTool><Ic s={20}>{Ico.exprFilter}</Ic></PanelTool>
            <Drop $w={18} />
            <PanelTool><Ic s={20}>{Ico.down}</Ic></PanelTool>
            <PanelTool><Ic s={20}>{Ico.up}</Ic></PanelTool>
            <PanelTool><Ic s={18}>{Ico.remove}</Ic></PanelTool>
          </PanelTools>
          <Tree>
            <LayerRow>
              <OrangeCheck><Check /></OrangeCheck>
              <Swatch />
              <LayerName>cb_2016_us_state_500k</LayerName>
            </LayerRow>
          </Tree>
          <Tabs>
            <Tab $on>Layers Panel</Tab>
            <Tab>Browser Panel</Tab>
          </Tabs>
        </Panel>
        <MapArea>
          <MapDrawing />
        </MapArea>
      </Middle>
      <StatusBar>
        <StatusLabel $ml={0}>Coordinate</StatusLabel>
        <StatusField $w={172} $ml={6} $center>1351823,-1141568</StatusField>
        <StatusIcon $ml={4}>
          <Ic s={16}>
            <path d="M5 2l14 18M19 2L5 20" stroke="#444" strokeWidth="2.4" />
            <circle cx="12" cy="11" r="6" fill="none" stroke="#444" strokeWidth="1.6" />
          </Ic>
        </StatusIcon>
        <StatusLabel $ml={14}>Scale</StatusLabel>
        <StatusField $w={114} $ml={6}>
          :37,596,623
          <ComboArrow />
        </StatusField>
        <StatusIcon $ml={6}><Lock size={15} color="#666" fill="#777" /></StatusIcon>
        <StatusLabel $ml={13}>Magnifier</StatusLabel>
        <StatusField $w={88} $ml={6}>
          100%
          <SpinArrows />
        </StatusField>
        <StatusLabel $ml={11}>Rotation</StatusLabel>
        <StatusField $w={88} $ml={12}>
          0.0
          <SpinArrows />
        </StatusField>
        <StatusIcon $ml={10}><OrangeCheck><Check /></OrangeCheck></StatusIcon>
        <StatusLabel $ml={7}>Render</StatusLabel>
        <StatusIcon $ml={16}>
          <Ic s={16}>
            <circle cx="12" cy="12" r="10" fill="#333" />
            <circle cx="12" cy="12" r="5" fill="#ddd" />
            <path d="M12 2v20M2 12h20" stroke="#ddd" strokeWidth="1.4" />
          </Ic>
        </StatusIcon>
        <StatusLabel $ml={5}>USER:100005 (OTF)</StatusLabel>
        <StatusIcon $ml={21}>
          <Ic s={18}>
            <path d="M3 3h18v14H10l-5 5v-5H3z" fill="#555" />
            <path d="M7 10h2M11 10h2M15 10h2" stroke="#fff" strokeWidth="2" />
          </Ic>
        </StatusIcon>
      </StatusBar>

      <Dialog>
        <TitleBar>
          <WinBtn $close>×</WinBtn>
          <WinBtn />
          <DialogTitle>Project Properties | CRS</DialogTitle>
        </TitleBar>
        <DialogBody>
          <Sidebar>
            {sideItems.map(([icon, label]) => (
              <SideItem key={label} $on={label === "CRS"}>
                <Ic>{Ico[icon]}</Ic>
                {label}
              </SideItem>
            ))}
          </Sidebar>
          <Content>
            <OtfRow>
              <OrangeCheck><Check /></OrangeCheck>
              Enable 'on the fly' CRS transformation (OTF)
            </OtfRow>
            <FormRow $mt={5} $gap={9}>
              <FormLabel>Filter</FormLabel>
              <TextField />
            </FormRow>
            <SectionLabel $mt={6}>Recently used coordinate reference systems</SectionLabel>
            <TableBox $h={186} $mt={4}>
              <TableHead>
                <HeadCell $first>Coordinate Reference System</HeadCell>
                <HeadCell>Authority ID</HeadCell>
              </TableHead>
              {recent.map(([name, id, tone]) => (
                <Row key={name} $tone={tone}>
                  <NameCell $indent={3}>{name}</NameCell>
                  <AuthCell>{id}</AuthCell>
                </Row>
              ))}
            </TableBox>
            <HScroll $mt={1}>
              <ScrollEnd $w={13} />
              <HThumb $w={471} />
              <ScrollEnd $w={12} $right />
            </HScroll>
            <Splitter />
            <SectionLabel $mt={7}>
              Coordinate reference systems of the world
              <HideBox>Hide deprecated CRSs</HideBox>
            </SectionLabel>
            <TableWrap>
              <GrowTable $h={213}>
                <TableHead>
                  <HeadCell $first>Coordinate Reference System</HeadCell>
                  <HeadCell>Authority ID</HeadCell>
                </TableHead>
                <Row $tone="grey"><NameCell $indent={63}>Imported from GDAL</NameCell><AuthCell>EPSG:5591</AuthCell></Row>
                <Row $tone="white"><NameCell $indent={63}>Imported from GDAL</NameCell><AuthCell>EPSG:5828</AuthCell></Row>
                <Row $tone="grey"><NameCell $indent={63}>Imported from GDAL</NameCell><AuthCell>EPSG:5884</AuthCell></Row>
                <Row $tone="white"><NameCell $indent={63}>Imported from GDAL</NameCell><AuthCell>EPSG:6133</AuthCell></Row>
                <Row $tone="grey">
                  <NameCell $indent={28} $italic><Tri /><TreeLabel>van der Grinten (I)</TreeLabel></NameCell>
                  <AuthCell />
                </Row>
                <Row $tone="white"><NameCell $indent={63}>Sphere_Van_der_Grinten_I</NameCell><AuthCell>EPSG:53029</AuthCell></Row>
                <Row $tone="grey"><NameCell $indent={63}>World_Van_der_Grinten_I</NameCell><AuthCell>EPSG:54029</AuthCell></Row>
                <Row $tone="white">
                  <NameCell $indent={8} $italic $bold>
                    <Tri />
                    <UserGlyph viewBox="0 0 16 14">
                      <circle cx="8" cy="4" r="3.6" fill="#222" />
                      <path d="M1 14c0-5 4-6 7-6s7 1 7 6z" fill="#222" />
                    </UserGlyph>
                    User Defined Coordinate Sy…
                  </NameCell>
                  <AuthCell />
                </Row>
                <Row $tone="sel"><NameCell $indent={43}>Hawaii island chain</NameCell><AuthCell>USER:100005</AuthCell></Row>
                <Row $tone="white"><NameCell $indent={47}>* Generated CRS (+proj=lcc …</NameCell><AuthCell>USER:100007</AuthCell></Row>
              </GrowTable>
              <VScroll>
                <VEnd />
                <VThumb />
                <VEnd $down />
              </VScroll>
            </TableWrap>
            <HScroll $w={484} $mt={2}>
              <ScrollEnd $w={13} />
              <HThumb $w={444} />
              <ScrollEnd $w={13} $right />
            </HScroll>
            <FormRow $mt={6} $gap={8}>
              <FormLabel>Selected CRS:</FormLabel>
              <TextField>Hawaii island chain</TextField>
            </FormRow>
            <Proj>
              +proj=aea +lat_1=9 +lat_2=36 +lat_0=22.5 +lon_0=-156 +x_0=0 +y_0=0
              <br />
              +datum=NAD83 +units=m +no_defs
            </Proj>
            <Buttons>
              <Btn>Help</Btn>
              <BtnGap />
              <Btn>Apply</Btn>
              <Btn><span><u>C</u>ancel</span></Btn>
              <Btn $ok><span><u>O</u>K</span></Btn>
            </Buttons>
          </Content>
        </DialogBody>
      </Dialog>
    </Screen>
  );
}
